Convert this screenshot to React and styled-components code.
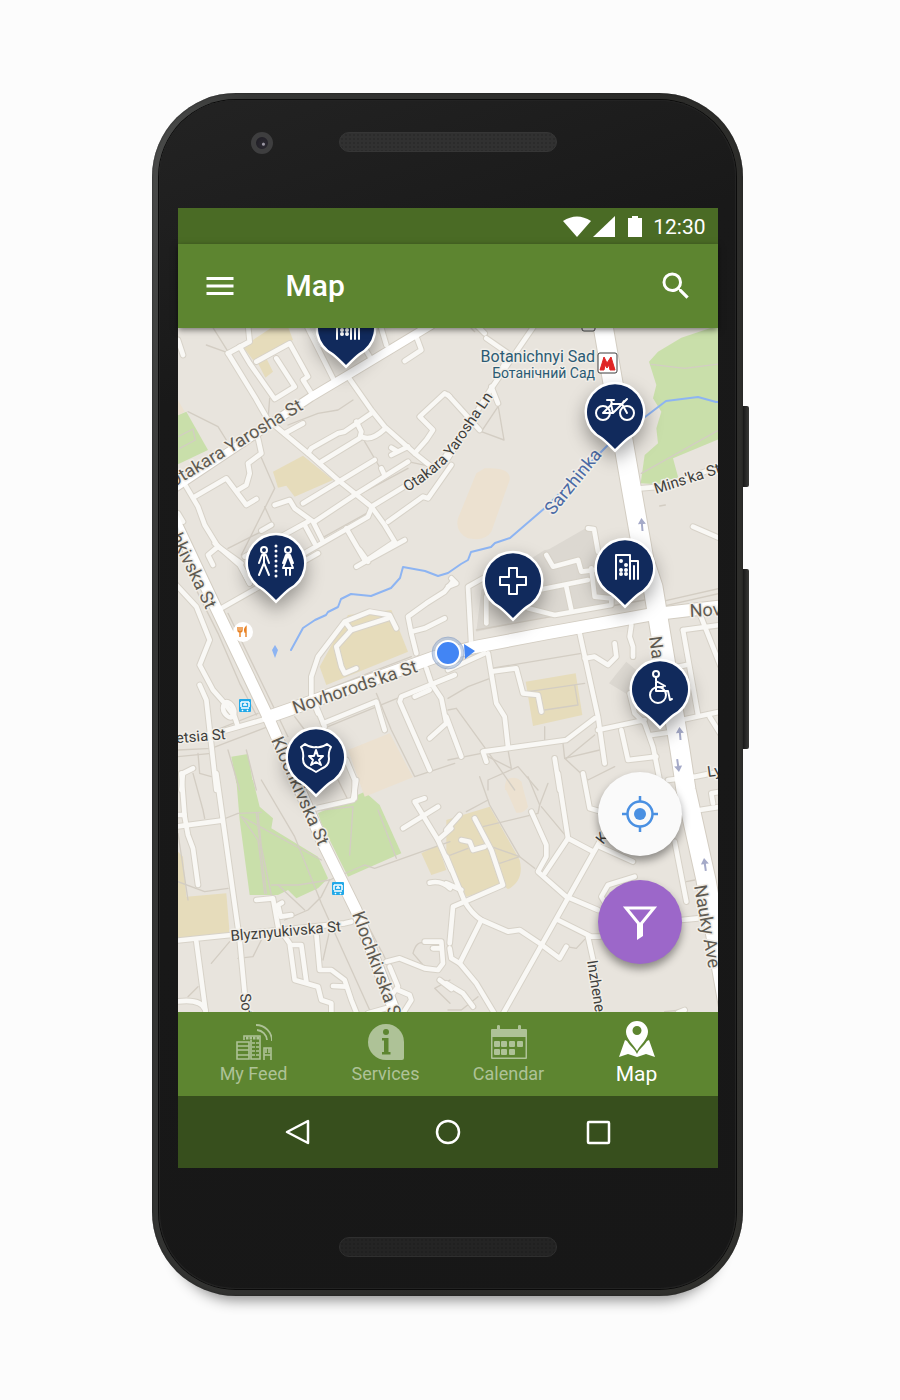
import React from "react";
import styled, { createGlobalStyle } from "styled-components";
import { MdMenu, MdSearch } from "react-icons/md";

const GlobalStyle = createGlobalStyle`
  *, *::before, *::after { box-sizing: border-box; }
  body {
    margin: 0;
    background: #fcfcfc;
    font-family: Roboto, "Liberation Sans", sans-serif;
  }
`;

/* ---------- Device ---------- */

const Page = styled.main`
  display: flex;
  justify-content: center;
  padding: 93px 24px 104px;
`;

const Device = styled.div`
  display: flex;
  flex: 1;
  max-width: 597px;
`;

const Frame = styled.div`
  flex: 1;
  min-width: 0;
  padding: 7px;
  border-radius: 84px;
  background: linear-gradient(100deg, #4c4d4c 0, #363736 12%, #2b2b29 60%, #30302d 100%);
  box-shadow: inset 0 0 2px #1c1c1c, 0 26px 14px -22px rgba(0, 0, 0, 0.45);
`;

const Face = styled.div`
  padding: 0 18px 0 19px;
  border-radius: 77px;
  background: linear-gradient(160deg, #232323 0, #191919 22%, #171717 100%);
  box-shadow: 0 0 0 1px #0b0b0b, inset 0 0 0 1px #232323;
`;

const SideKeys = styled.div`
  display: flex;
  flex-direction: column;
  gap: 82px;
  width: 6px;
  padding-top: 313px;
`;

const SideKey = styled.div`
  height: ${(p) => p.$length}px;
  border-radius: 0 2px 2px 0;
  background: linear-gradient(90deg, #181818, #3a3a38);
`;

const TopBezel = styled.div`
  display: grid;
  grid-template-columns: 1fr 218px 1fr;
  align-items: start;
  height: 108px;
  padding-top: 32px;
`;

const BottomBezel = styled.div`
  display: flex;
  justify-content: center;
  height: 121px;
  padding-top: 69px;
`;

const Camera = styled.div`
  justify-self: center;
  width: 22px;
  height: 22px;
  margin-left: 8px;
  border: 5px solid #3e3e3f;
  border-radius: 50%;
  background: radial-gradient(circle at 62% 60%, #9b98a4 0 1px, #2a2830 2px, #1c1a21 100%);
`;

const Speaker = styled.div`
  width: 218px;
  height: 20px;
  border: 1px solid ${(p) => (p.$dim ? "#2f2f2f" : "#363636")};
  border-radius: 10px;
  background: radial-gradient(circle, ${(p) => (p.$dim ? "#202020" : "#2b2b2b")} 0 1px, transparent 1px) 0 0 / 4px 4px,
    ${(p) => (p.$dim ? "#242424" : "#313131")};
`;

const Screen = styled.div`
  display: flex;
  flex-direction: column;
  background: #5d8530;
  color: #fff;
`;

/* ---------- Bars ---------- */

const StatusBar = styled.div`
  display: flex;
  align-items: center;
  justify-content: flex-end;
  height: 36px;
  padding: 2px 12px 0 0;
  background: #4a6b25;
`;

const StatusIcons = styled.svg`
  width: 80px;
  height: 24px;
  margin-right: 10px;
  fill: #fff;
`;

const Clock = styled.time`
  font-size: 21px;
  line-height: 24px;
`;

const AppBar = styled.header`
  position: relative;
  z-index: 1;
  display: flex;
  align-items: center;
  gap: 48px;
  height: 84px;
  padding: 0 24px;
  background: #5d8530;
  box-shadow: 0 2px 6px rgba(0, 0, 0, 0.5);
`;

const IconButton = styled.button`
  display: flex;
  padding: 0;
  border: 0;
  background: none;
  color: #fff;
  font-size: 36px;
  cursor: pointer;
`;

const Title = styled.h1`
  flex: 1;
  margin: 0;
  font-size: 30px;
  font-weight: 500;
  line-height: 36px;
`;

const TabBar = styled.nav`
  display: grid;
  grid-template-columns: 152fr 112fr 134fr 122fr;
  height: 84px;
  padding-right: 20px;
`;

const Tab = styled.a`
  display: flex;
  flex-direction: column;
  align-items: center;
  gap: ${(p) => (p.$active ? 5 : 2)}px;
  padding-top: ${(p) => (p.$active ? 9 : 12)}px;
  color: ${(p) => (p.$active ? "#fff" : "#aec297")};
  font-size: ${(p) => (p.$active ? 21 : 18)}px;
  line-height: 24px;
  text-decoration: none;

  svg { width: 36px; height: 36px; }
`;

const SystemBar = styled.div`
  display: grid;
  grid-template-columns: repeat(3, 1fr);
  justify-items: center;
  align-items: center;
  height: 72px;
  padding: 0 45px;
  background: #374f1d;
`;

/* ---------- Map ---------- */

const MapView = styled.section`
  position: relative;
  overflow: hidden;
  background: #e8e4dd;
`;

const MapCanvas = styled.svg`
  display: block;
  width: 100%;
  height: auto;
`;

const PinButton = styled.button`
  position: absolute;
  left: ${(p) => ((p.$x - 178) / 540) * 100}%;
  top: ${(p) => ((p.$y - 328) / 684) * 100}%;
  width: 64px;
  height: 76px;
  padding: 0;
  border: 0;
  background: none;
  transform: translate(-32px, -32px);
  cursor: pointer;

  svg {
    display: block;
    overflow: visible;
    filter: drop-shadow(0 8px 9px rgba(0, 0, 0, 0.35));
  }
`;

const FabStack = styled.div`
  position: absolute;
  right: 36px;
  bottom: 48px;
  display: flex;
  flex-direction: column;
  gap: 24px;
`;

const Fab = styled.button`
  display: flex;
  align-items: center;
  justify-content: center;
  width: 84px;
  height: 84px;
  padding: 0;
  border: 0;
  border-radius: 50%;
  background: ${(p) => (p.$accent ? "#9c67c9" : "#fafafa")};
  color: ${(p) => (p.$accent ? "#fff" : "#4a90e2")};
  box-shadow: 0 5px 8px rgba(0, 0, 0, 0.4);
  cursor: pointer;
`;

/* Map data: each tile is drawn at three units to the pixel from its own origin. */
const TILES = [
  {
    x: 178, y: 325,
    green: ["M-9 275L25 260L90 375L-9 422Z"],
    tan: [
      "M195 65L285 5L330 5L345 45L225 105Z",
      "M238 110L265 100L285 140L262 158Z",
      "M285 440L375 392L465 465L350 515L325 482L300 488Z",
    ],
    peach: ["M0 225L20 260L0 270Z"],
    thin: [
      "M30 260L120 305L145 345", "M240 375L290 490L190 690", "M85 60L140 80", "M330 300L420 265L480 255L525 225",
      "M560 350L610 435", "M150 670L270 610", "M260 545L285 600", "M100 0L150 80", "M275 220L270 285",
      "M0 335L45 312L52 345L5 370", "M420 575L560 500L690 430", "M430 640L575 560", "M690 410L760 425",
    ],
    roads: [
      "M0 45L15 90", "M150 85L230 215L270 285L390 385L480 465L580 545L620 600L650 650L560 710", "M150 85L215 50L210 0",
      "M185 65L215 115L290 222L350 185L295 100", "M235 110L335 55L390 155L375 165L400 205", "M385 0L465 160",
      "M400 0L430 60", "M510 155L580 255L620 305L710 385L760 425", "M710 385L745 345L765 315L725 275L800 205L815 215",
      "M610 10L625 60", "M680 108L730 75L715 35", "M560 70L575 95", "M320 325L375 295",
      "M390 385L400 370L480 325L500 320L580 265", "M535 290L550 320L545 340L430 410", "M550 335Q580 350 620 312",
      "M690 365L640 390M660 380L640 368", "M375 535L590 405", "M610 430L617 445", "M690 410L530 510L410 590",
      "M580 545L720 460L780 425L815 375", "M630 590L735 515L750 520L820 420", "M580 550L570 575L510 610L300 730",
      "M290 540L335 525L350 550L405 590L435 650", "M380 600L410 655", "M505 610L560 705",
      "M240 340L250 385L210 415L215 445L205 480L180 495", "M50 515L145 460L205 540L235 522",
      "M10 460L60 545L80 600L120 665L190 715", "M120 665L90 690L105 720", "M0 565L15 590", "M250 617L280 600",
      "M200 695L390 590",
    ],
  },
  {
    x: 448, y: 325,
    green: ["M830 -5L700 38L630 80L603 110L625 180L615 220L640 260L625 310L630 355L590 390L578 475L670 480L690 455L675 400L830 335Z"],
    peach: ["M110 430Q190 425 185 465L130 620Q110 650 60 640Q20 620 30 580L85 445Z"],
    grey: ["M290 680L430 600L445 700L400 760Z"],
    thin: ["M610 118L710 130L830 115", "M580 445L830 305", "M150 240L168 345L100 320L150 245", "M635 543L652 540", "M60 0L80 20"],
    roads: [
      "M0 400L130 190L260 0", "M85 0L110 25", "M115 40L180 85L160 140", "M0 210L95 315", "M130 185L150 235",
      "M575 490L640 485L830 420", "M735 605L816 640", "M420 610L438 612L450 680",
    ],
  },
  {
    x: 178, y: 550,
    tan: ["M425 350L510 195L640 180L690 305L445 405Z"],
    peach: ["M510 600L635 550L705 682L560 740Z"],
    green: ["M160 620L210 612L225 700L175 700Z"],
    thin: [
      "M50 110L120 250L185 400L235 495", "M150 190L330 560", "M0 600L100 595L270 530", "M595 430L640 540L710 680L830 640",
      "M150 600L185 720", "M60 610L65 670L100 680", "M205 600L235 720", "M90 550L240 490", "M440 420L700 320",
      "M450 530L670 440", "M350 500L380 540", "M0 620L100 610",
    ],
    roads: [
      "M-5 105L55 170L95 270L65 345L105 420L140 460L170 500L180 530", "M140 460C150 445 180 480 165 500C150 510 125 480 140 460",
      "M65 405L85 450L95 540L115 720", "M-5 570L130 545L270 505", "M130 175L420 10", "M185 40L215 100", "M110 -20L185 45L215 100",
      "M535 50L570 30L680 -30", "M545 0L570 35", "M420 490L400 440L400 380L420 320L500 215L575 185L635 195L655 235",
      "M505 220L520 240L630 205", "M520 240L475 290L490 350L500 370L535 355", "M415 470L440 530", "M435 520L595 455L605 490L620 540",
      "M715 310L700 250L690 200L745 160L800 125L820 100", "M700 245L740 235L800 205", "M745 355L760 400L790 445L805 520L755 565",
      "M830 375L670 440L665 455L755 660", "M710 440L755 420", "M505 630L530 690L530 745", "M10 720L15 670L45 655",
    ],
  },
  {
    x: 448, y: 550,
    tan: ["M233 395L383 370L403 495L255 528Z"],
    grey: ["M85 245L100 120L290 0L440 -20L490 150L480 175L300 200Z", "M483 400L535 335L600 390L550 440Z"],
    peach: ["M180 695Q200 675 220 695L225 720H170Z"],
    thin: [
      "M0 445L60 410L140 380", "M25 475L130 620L200 720", "M100 610L190 655L180 600", "M240 425L410 400M380 405L390 465L290 480",
      "M130 355L400 310", "M290 530L290 580", "M345 580L350 625L455 600", "M355 625L440 555", "M120 720V690L210 650L270 720",
      "M0 630L100 610", "M640 170L816 130", "M640 155L816 115", "M350 625L420 690L500 650", "M85 240L590 150", "M0 480L25 475",
    ],
    roads: [
      "M70 290L60 110L105 85", "M115 220L115 140", "M240 175L320 195L490 165L490 145", "M270 120L420 90", "M355 110L370 180",
      "M295 15L315 50L390 30L400 65L440 60", "M430 55L440 140L490 145", "M0 110L25 100L10 85", "M395 250L450 500L470 640",
      "M410 325L440 320L480 345L505 320L500 280", "M550 225L545 260L555 290L555 320", "M120 310L145 460L170 500L180 590",
      "M130 365L205 355L225 430L270 435L280 485", "M115 635L105 605L355 570L440 505", "M110 310L0 360", "M450 540L590 510",
      "M520 540L540 630L625 620", "M545 430L560 490L590 520L615 590L635 690", "M610 555L680 545", "M690 350L715 345",
      "M705 240L816 225", "M705 240L750 495", "M700 510L816 485", "M755 190L816 345", "M785 500L816 550", "M660 690L740 680L830 662",
      "M-5 500L40 620", "M320 625L335 720",
    ],
  },
  {
    x: 178, y: 780,
    tan: ["M0 215L15 230L25 350L145 340L155 460L0 475Z", "M730 220L780 195L805 270L760 285Z"],
    green: [
      "M175 0L225 0L245 80L285 115L280 145L420 230L450 295L420 325L355 355L330 330L300 345L215 345L185 120Z",
      "M420 100L560 35L605 75L670 220L510 290L430 130Z",
    ],
    thin: [
      "M0 160L30 360", "M0 305L80 335L150 325", "M250 97L180 100L130 120", "M250 0L350 170L430 370L575 690", "M190 110L430 240",
      "M240 100L250 200L280 345", "M235 100L265 340", "M190 110L240 180L260 340", "M455 300L360 315L280 315", "M300 315L380 390",
      "M455 300L430 350L390 390L320 420", "M430 90L525 80L515 225", "M600 90L655 235", "M455 300L560 255L590 265L816 185",
      "M445 200L640 570", "M100 550L155 485", "M180 535L225 530L250 480", "M460 430L435 540", "M735 555L705 520Q715 480 740 490",
      "M45 -20L75 90L80 115", "M30 650L60 620", "M480 0L510 60", "M816 600L770 625L816 670",
    ],
    roads: [
      "M0 105L20 105", "M10 -20L20 110L30 165L45 205L60 315", "M-5 140L130 122", "M115 -20L185 480L200 640L205 710",
      "M-5 482L160 465L500 430L520 425", "M55 485L85 710", "M-5 665Q70 655 82 690", "M235 360L285 355L300 440L335 490L350 600L420 620L430 660L460 670L460 710",
      "M312 368L300 375L308 410L340 405", "M345 495L370 495L385 605", "M415 460L425 570L460 570L500 600L520 660L540 710",
      "M465 618L505 620", "M625 545L665 535L740 565L780 570L795 550L790 485L740 485", "M765 505L790 505", "M635 560L660 620L645 640",
      "M660 630L695 645L700 660L675 700", "M570 700L640 680", "M415 85L525 60L535 0", "M740 55L710 65L780 180L820 270",
      "M675 145L780 80", "M780 180L820 145", "M755 308Q790 300 816 325", "M785 600L820 627",
    ],
  },
  {
    x: 448, y: 780,
    tan: ["M-5 120L125 80L215 240Q230 300 180 328L165 315L55 350L-5 230Z"],
    peach: ["M175 0Q200 -15 220 5L240 80Q230 100 205 98L170 20Z"],
    thin: [
      "M95 -10L125 75L215 230L260 265", "M55 95L120 60", "M105 140L270 100L275 75L240 -10", "M275 75L300 10", "M280 80L355 170",
      "M155 250L215 230L130 200", "M410 478L385 505L355 500", "M-5 230L60 205", "M715 305L740 300", "M650 695L700 690",
      "M770 400L820 700", "M0 690L40 690L90 650",
    ],
    roads: [
      "M330 -20L360 175L435 215", "M480 145L455 185L160 710", "M360 175L290 280", "M250 95L295 195L295 230L270 275L355 350L450 390",
      "M455 200L555 245", "M330 420L430 470L455 470", "M420 470L440 560L455 710", "M475 375L460 350L480 315L560 290",
      "M405 -20L425 85L460 95", "M80 115L130 210L165 315L50 365L15 380L5 490", "M-5 230L50 365Q70 400 100 420L180 455L215 450L275 490L335 535L355 500",
      "M100 420L35 550L85 610L145 710", "M5 505L10 535L35 550", "M-5 610L45 640L75 680", "M-5 150L35 105",
      "M110 200L75 210L65 185L40 180", "M680 185L715 365", "M700 420L750 415", "M755 90L830 78", "M795 70L790 40L816 35", "M-5 310L40 330",
      "M690 698L710 690",
    ],
  },
];

const MAIN_ROADS = [
  { d: "M170 491L311 397L348 375L431 325", w: 8 },
  { d: "M268 717L291 709L435 657L475 647L548 633L648 615L725 606", w: 12 },
  { d: "M165 500L216 608L268 717L275 733L323 843L356 910L398 1020", w: 11 },
  { d: "M602 320L632 492L644 560L653 587L665 660L680 750L686 790L706 880L730 1015", w: 19 },
];

const RIVER =
  "M725 402L716 402L698 397L666 401L645 417L608 445L546 507L510 538L495 543L491 547L471 552L468 560L461 564L448 573L438 576L425 571L403 567L400 578L391 588L371 596L351 594L341 599L338 607L328 612L326 615L315 620L303 628L291 650";

const LABELS = [
  { t: "Otakara Yarosha St", x: 304, y: 409, r: -31, s: 18, c: "#5f5b52", a: "end" },
  { t: "Sarzhinka", x: 553, y: 516, r: -51, s: 18, c: "#4b6aa5" },
  { t: "Mins'ka St", x: 656, y: 494, r: -18, s: 15, c: "#3f3f3c" },
  { t: "Novhorods'ka St", x: 295, y: 714, r: -19, s: 18, c: "#5f5b52" },
  { t: "Nov", x: 690, y: 617, r: -3, s: 18, c: "#5f5b52" },
  { t: "etsia St", x: 226, y: 739, r: -5, s: 15, c: "#3f3f3c", a: "end" },
  { t: "Na", x: 649, y: 637, r: 82, s: 18, c: "#5f5b52" },
  { t: "Klochkivska St", x: 206, y: 610, r: 64, s: 18, c: "#5f5b52", a: "end" },
  { t: "Klochkivska St", x: 271, y: 740, r: 66, s: 18, c: "#5f5b52" },
  { t: "Klochkivska St", x: 352, y: 914, r: 70, s: 18, c: "#5f5b52" },
  { t: "Blyznyukivska St", x: 231, y: 941, r: -5, s: 15, c: "#3f3f3c" },
  { t: "Sot", x: 240, y: 994, r: 84, s: 15, c: "#3f3f3c" },
  { t: "Inzhene", x: 587, y: 961, r: 81, s: 15, c: "#3f3f3c" },
  { t: "Nauky Ave", x: 694, y: 886, r: 80, s: 18, c: "#5f5b52" },
  { t: "Ly", x: 708, y: 777, r: -8, s: 15, c: "#3f3f3c" },
  { t: "K", x: 603, y: 845, r: -52, s: 15, c: "#3f3f3c" },
];

const ARROWS = [
  { x: 642, y: 525, r: -5 },
  { x: 680, y: 734, r: -5 },
  { x: 678, y: 765, r: 172 },
  { x: 705, y: 865, r: -8 },
];

function TileLayer({ kind, ...paint }) {
  return (
    <g {...paint}>
      {TILES.map((tile) => (
        <g key={`${tile.x}-${tile.y}`} transform={`translate(${tile.x} ${tile.y}) scale(${1 / 3})`}>
          {(tile[kind] || []).map((d) => <path key={d} d={d} />)}
        </g>
      ))}
    </g>
  );
}

function TransitStop({ x, y }) {
  return (
    <g transform={`translate(${x} ${y})`}>
      <rect x="-6" y="-6" width="12" height="13" rx="1" fill="#22a9e8" />
      <path d="M-4 -3h3M1 -3h3M-4 -3v5M4 -3v5M-4 3h8M-2 5l-1 1M2 5l1 1M-2 0h4M0 -4v4" stroke="#fff" strokeWidth="1.5" fill="none" />
    </g>
  );
}

function StreetMap() {
  const stroke = { fill: "none", strokeLinecap: "round", strokeLinejoin: "round" };
  return (
    <MapCanvas viewBox="178 328 540 684" role="img" aria-label="Street map">
      <rect x="178" y="328" width="540" height="684" fill="#e8e4dd" />
      <TileLayer kind="grey" fill="#dcd8d1" />
      <TileLayer kind="green" fill="#c9dfaa" />
      <TileLayer kind="tan" fill="#e6dcbb" />
      <TileLayer kind="peach" fill="#ece1d0" />
      <TileLayer kind="thin" {...stroke} stroke="#d3cdc3" strokeWidth="4" />
      <TileLayer kind="roads" {...stroke} stroke="#d7d2c8" strokeWidth="20" />
      <g {...stroke} stroke="#d3cdc2">
        {MAIN_ROADS.map((r) => <path key={r.d} d={r.d} strokeWidth={r.w + 2} />)}
      </g>
      <TileLayer kind="roads" {...stroke} stroke="#f9f8f5" strokeWidth="14" />
      <g {...stroke} stroke="#fff">
        {MAIN_ROADS.map((r) => <path key={r.d} d={r.d} strokeWidth={r.w} />)}
      </g>
      <path d={RIVER} {...stroke} stroke="#8db4f2" strokeWidth="2" />
      <path d="M275 645L278 650L275 658L272 650Z" fill="#8db4f2" />

      <g fill="#a5aac8">
        {ARROWS.map((a) => (
          <path key={a.y} transform={`translate(${a.x} ${a.y}) rotate(${a.r})`} d="M0 -7L4 -1H1V6H-1V-1H-4Z" />
        ))}
      </g>

      <rect x="582" y="318" width="13" height="13" rx="2" fill="#f4f3f0" stroke="#444" strokeWidth="1" />
      <rect x="598" y="353" width="19" height="20" rx="2" fill="#fff" stroke="#3c3c3c" strokeWidth="1" />
      <path d="M600 370L604 357L607 363L611 357L615 370H610L609 365L607 368L605 365L604 370Z" fill="#e02424" stroke="#e02424" strokeLinejoin="round" />

      <circle cx="243" cy="632" r="10" fill="#fff" />
      <path d="M238 627v3q0 2 2 2t2 -2v-3M240 627v10" stroke="#e88224" strokeWidth="1.4" fill="none" />
      <path d="M246 627v10M246 627q-2 2 -1 5h1z" stroke="#e88224" strokeWidth="1.4" fill="#e88224" />
      <TransitStop x={245} y={705} />
      <TransitStop x={338} y={888} />

      <g stroke="#f1eee8" strokeWidth="3" strokeLinejoin="round" paintOrder="stroke">
        {LABELS.map((l) => (
          <text
            key={`${l.x}-${l.y}`}
            transform={`translate(${l.x} ${l.y}) rotate(${l.r})`}
            fontSize={l.s}
            fill={l.c}
            textAnchor={l.a || "start"}
          >
            {l.t}
          </text>
        ))}
        <path id="lane" d="M407 492Q441 472 457 450L500 386" fill="none" stroke="none" />
        <text fontSize="15" fill="#3f3f3c"><textPath href="#lane">Otakara Yarosha Ln</textPath></text>
        <text x="595" y="362" fontSize="16" fill="#2b5b74" textAnchor="end">Botanichnyi Sad</text>
        <text x="595" y="378" fontSize="14" fill="#2b5b74" textAnchor="end">Ботанічний Сад</text>
      </g>

      <circle cx="448" cy="653" r="16" fill="#8fa9d0" fillOpacity="0.5" stroke="#8fa3c4" strokeOpacity="0.6" />
      <path d="M464 644L475 651L465 659Z" fill="#4285f4" />
      <circle cx="448" cy="653" r="12" fill="#4285f4" stroke="#fff" strokeWidth="2" />
    </MapCanvas>
  );
}

const PIN_GLYPHS = {
  building: (
    <>
      <path d="M-9 11V-13H5V11M5 -7H13V11M9 -2V11" />
      <path d="M-4 -7h0M1 -3h0M-4 2h0M1 2h0M-4 6h0M1 6h0" strokeWidth="4" />
    </>
  ),
  bike: (
    <>
      <circle cx="-12" cy="1" r="7" />
      <circle cx="12" cy="1" r="7" />
      <path d="M-8 -12H-1M-4 -12L-3 -8H7M-12 1L-4 -7M-12 1H-2L7 -8M-4 -8L-2 1M12 1L7 -8L12 -13M7 -8L9 -11" />
    </>
  ),
  restroom: (
    <>
      <circle cx="-12" cy="-13" r="3" />
      <path d="M-12 -9V0L-17 12M-12 0L-7 12M-17 0L-14 -8H-10L-7 0" />
      <circle cx="12" cy="-13" r="3" />
      <path d="M7 0L10 -8H14L17 0M12 -8L7 5H17ZM10 5V12M14 5V12" />
      <path d="M0 -17V14" strokeWidth="3" strokeDasharray="0 5" />
    </>
  ),
  hospital: <path d="M-4 -13H4V-4H13V4H4V13H-4V4H-13V-4H-4Z" />,
  wheelchair: (
    <>
      <circle cx="-4" cy="-15" r="3" />
      <path d="M-4 -11V2H8L10 11L12 10M-4 -8L5 -3M-4 -2H3" />
      <circle cx="-2" cy="6" r="8" />
    </>
  ),
  police: (
    <>
      <path d="M-15 -10L-11 -13Q-6 -9 0 -10Q6 -9 11 -13L15 -10Q12 -5 13 2Q13 9 5 12L0 15L-5 12Q-13 9 -13 2Q-12 -5 -15 -10Z" />
      <path d="M0 -7L2 -1H7L3 3L5 8L0 5L-5 8L-3 3L-7 -1H-2Z" />
    </>
  ),
};

const PINS = [
  { kind: "building", label: "Office near Otakara Yarosha St", x: 346, y: 328 },
  { kind: "bike", label: "Bicycle rental", x: 615, y: 412 },
  { kind: "restroom", label: "Public restroom", x: 276, y: 563 },
  { kind: "hospital", label: "Hospital", x: 513, y: 581 },
  { kind: "building", label: "Office near Nauky Ave", x: 626, y: 568 },
  { kind: "wheelchair", label: "Accessible place", x: 660, y: 689 },
  { kind: "police", label: "Police station", x: 317, y: 757 },
];

function Pin({ kind, label, x, y }) {
  return (
    <PinButton type="button" aria-label={label} $x={x} $y={y}>
      <svg width="64" height="76" viewBox="-32 -32 64 76">
        <path
          d="M-13 25Q-10 27 0 37Q10 27 13 25A28 28 0 1 0 -13 25Z"
          fill="#112a5c"
          stroke="#fff"
          strokeWidth="5"
          paintOrder="stroke"
        />
        <g fill="none" stroke="#fff" strokeWidth="2" strokeLinecap="round" strokeLinejoin="round">
          {PIN_GLYPHS[kind]}
        </g>
      </svg>
    </PinButton>
  );
}

/* ---------- Tab icons ---------- */

const FeedIcon = () => (
  <svg viewBox="0 0 36 36" fill="none" stroke="currentColor" aria-hidden="true">
    <path d="M1 35V18H13V35ZM1 22H13M1 26H13M1 31H13" strokeWidth="1.6" />
    <path d="M8 16V12H24V35H15V16" strokeWidth="1.6" />
    <path d="M10 14H23" strokeWidth="3" strokeDasharray="2.5 1" />
    <path d="M16 19H24M16 23H24M16 27H24M16 31H24" strokeWidth="1.6" strokeDasharray="3 1" />
    <path d="M28 36V24H35V36M28 31H35M30 24V29M33 24V29" strokeWidth="1.6" />
    <path d="M20 1A16 16 0 0 1 36 17M21 6A11 11 0 0 1 31 16" strokeWidth="1.8" />
  </svg>
);

const InfoIcon = () => (
  <svg viewBox="0 0 36 36" fill="currentColor" aria-hidden="true">
    <path d="M18 0A18 18 0 1 0 18 36H34Q36 36 36 34V18A18 18 0 0 0 18 0Z" />
    <circle cx="18" cy="8" r="3" fill="#5d8530" />
    <path d="M14 14H20.500V28H22.500V30.500H14V28H16V16.500H14Z" fill="#5d8530" />
  </svg>
);

const CalendarIcon = () => (
  <svg viewBox="0 0 36 36" fill="currentColor" aria-hidden="true">
    <path d="M0 6Q0 5 1 5H6V2Q6 1 7.500 1T9 2V5H27V2Q27 1 28.500 1T30 2V5H35Q36 5 36 6V34Q36 35 35 35H1Q0 35 0 34ZM1.500 13V33.500H34.500V13Z" fillRule="evenodd" />
    <g>
      {[3, 10, 18, 26].map((x) => <rect key={x} x={x} y="17" width="6" height="6" rx="1" />)}
      {[3, 10, 18].map((x) => <rect key={x} x={x} y="25" width="6" height="6" rx="1" />)}
    </g>
  </svg>
);

const MapIcon = () => (
  <svg viewBox="0 0 36 36" fill="currentColor" aria-hidden="true">
    <path d="M18 0A11 11 0 0 0 7 11C7 18 15 24 18 30C21 24 29 18 29 11A11 11 0 0 0 18 0ZM18 5A4.500 4.500 0 1 1 18 14A4.500 4.500 0 1 1 18 5Z" fillRule="evenodd" />
    <path d="M6 19L0 36L9 33L18 36L27 33L36 36L30 19L28 20C25 25 20 28 18 33C16 28 11 25 8 20Z" />
  </svg>
);

const TABS = [
  { label: "My Feed", href: "#feed", Icon: FeedIcon },
  { label: "Services", href: "#services", Icon: InfoIcon },
  { label: "Calendar", href: "#calendar", Icon: CalendarIcon },
  { label: "Map", href: "#map", Icon: MapIcon, active: true },
];

const SYSTEM_KEYS = [
  { label: "Back", shape: <path d="M24 3V25L3 14Z" /> },
  { label: "Home", shape: <circle cx="14" cy="14" r="11" /> },
  { label: "Recent apps", shape: <rect x="4" y="4" width="21" height="21" rx="1" /> },
];

export default function App() {
  return (
    <>
      <GlobalStyle />
      <Page>
        <Device>
          <Frame>
            <Face>
              <TopBezel>
                <Camera />
                <Speaker />
              </TopBezel>
              <Screen>
                <StatusBar>
                  <StatusIcons viewBox="0 0 80 24" aria-hidden="true">
                    <path d="M0 6Q14 -3 28 6L14 22Z" />
                    <path d="M30 22L52 1V22Z" />
                    <path d="M65 3H69V1H75V3H79V22H65Z" />
                  </StatusIcons>
                  <Clock>12:30</Clock>
                </StatusBar>
                <AppBar>
                  <IconButton type="button" aria-label="Menu"><MdMenu /></IconButton>
                  <Title>Map</Title>
                  <IconButton type="button" aria-label="Search"><MdSearch /></IconButton>
                </AppBar>
                <MapView>
                  <StreetMap />
                  {PINS.map((pin) => <Pin key={pin.label} {...pin} />)}
                  <FabStack>
                    <Fab type="button" aria-label="My location">
                      <svg width="36" height="36" viewBox="0 0 36 36" fill="none" stroke="currentColor" strokeWidth="2.500">
                        <circle cx="18" cy="18" r="12.500" />
                        <circle cx="18" cy="18" r="6" fill="currentColor" stroke="none" />
                        <path d="M18 0V6M18 30V36M0 18H6M30 18H36" />
                      </svg>
                    </Fab>
                    <Fab type="button" aria-label="Filter" $accent>
                      <svg width="36" height="36" viewBox="0 0 36 36" fill="none" stroke="currentColor" strokeWidth="3">
                        <path d="M4 4H32L19 20H17Z" />
                        <path d="M15 19H21V32L15 36Z" fill="currentColor" stroke="none" />
                      </svg>
                    </Fab>
                  </FabStack>
                </MapView>
                <TabBar aria-label="Sections">
                  {TABS.map(({ label, href, Icon, active }) => (
                    <Tab key={label} href={href} $active={active} aria-current={active ? "page" : undefined}>
                      <Icon />
                      <span>{label}</span>
                    </Tab>
                  ))}
                </TabBar>
                <SystemBar>
                  {SYSTEM_KEYS.map((key) => (
                    <IconButton key={key.label} type="button" aria-label={key.label}>
                      <svg width="28" height="28" viewBox="0 0 28 28" fill="none" stroke="currentColor" strokeWidth="2.500" strokeLinejoin="round">
                        {key.shape}
                      </svg>
                    </IconButton>
                  ))}
                </SystemBar>
              </Screen>
              <BottomBezel>
                <Speaker $dim />
              </BottomBezel>
            </Face>
          </Frame>
          <SideKeys>
            <SideKey $length={81} />
            <SideKey $length={180} />
          </SideKeys>
        </Device>
      </Page>
    </>
  );
}
